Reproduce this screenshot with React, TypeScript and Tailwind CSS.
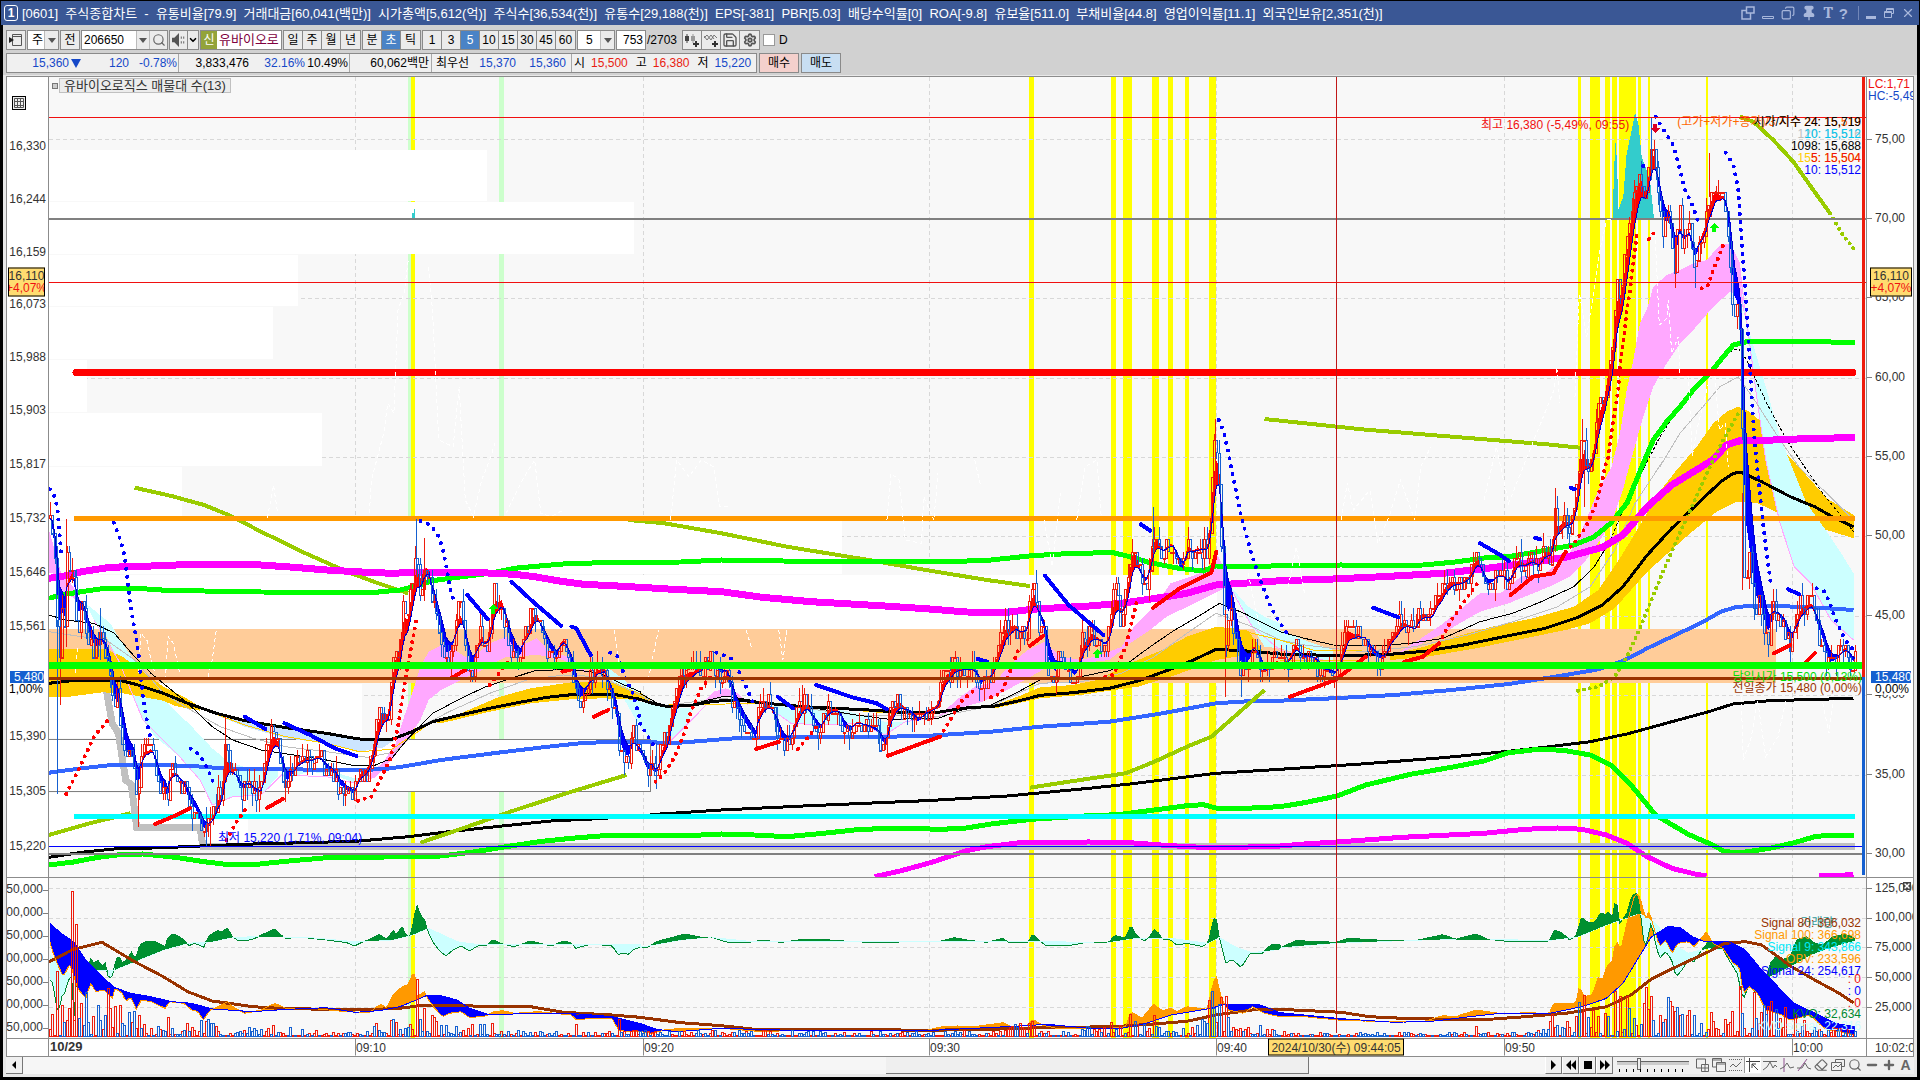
import type { ReactNode } from "react";
import { ChevronDown, Copy, Eraser, Minus, Pin, Plus, Save, Search, Settings, X } from "lucide-react";

type Pt = [number, number];
type Box = { x: number; y: number; w: number; h: number };

const MAIN: Box = { x: 49, y: 77, w: 1817, h: 800 };
const SUB: Box = { x: 49, y: 878, w: 1817, h: 160 };
const TIME: Box = { x: 49, y: 1039, w: 1817, h: 17 };

// Series are stored as fine-grained points per block: [origin x, origin y, units per px x, units per px y]
const BLOCKS: Record<string, [number, number, number, number]> = {
  A: [0, 460, 2.45, 3],
  B: [640, 460, 2.45, 3],
  C: [1280, 460, 2.45, 3],
  D: [1480, 70, 3, 3],
  E: [0, 860, 2.45, 3],
  F: [640, 860, 2.45, 3],
  G: [1280, 860, 2.45, 3],
};

// "A 120,355 150,350 / 200,10 B 80,388": a letter switches the block, a slash lifts the pen
function parse(src: string): Pt[][] {
  const out: Pt[][] = [[]];
  let b = BLOCKS.A;
  for (const t of src.trim().split(/\s+/)) {
    if (t === "/") out.push([]);
    else if (BLOCKS[t]) b = BLOCKS[t];
    else {
      const [x, y] = t.split(",").map(Number);
      out[out.length - 1].push([b[0] + x / b[2], b[1] + y / b[3]]);
    }
  }
  return out;
}

const toPath = (pts: Pt[]) => "M" + pts.map(([x, y]) => `${x.toFixed(1)} ${y.toFixed(1)}`).join("L");
const path = (src: string) => parse(src).map(toPath).join("");

function sampler(src: string) {
  const pts = parse(src).flat().sort((a, b) => a[0] - b[0]);
  return (x: number) => {
    let i = 1;
    while (i < pts.length - 1 && pts[i][0] < x) i++;
    const [x0, y0] = pts[i - 1];
    const [x1, y1] = pts[i];
    const k = Math.min(1, Math.max(0, (x - x0) / (x1 - x0 || 1)));
    return y0 + (y1 - y0) * k;
  };
}

function rng(seed: number) {
  let s = seed;
  return () => {
    s = (s * 1664525 + 1013904223) % 4294967296;
    return s / 4294967296;
  };
}

// Area between two sampled series, split by which one is on top
function between(xs: number[], top: number[], base: number[]) {
  let up = "";
  let down = "";
  for (let i = 1; i < xs.length; i++) {
    const quad = `M${xs[i - 1].toFixed(1)} ${top[i - 1].toFixed(1)}L${xs[i].toFixed(1)} ${top[i].toFixed(1)}V${base[i].toFixed(1)}L${xs[i - 1].toFixed(1)} ${base[i - 1].toFixed(1)}Z`;
    if (top[i] + top[i - 1] < base[i] + base[i - 1]) up += quad;
    else down += quad;
  }
  return { up, down };
}

const PRICE = `A 122,170 130,220 135,330 140,480 147,610 152,420 158,480 165,250 172,380 178,300 185,440 190,520 195,470 200,440 206,450 212,520 218,540 225,570 232,550 240,570 248,520 255,560 262,590 268,640 275,700 282,780 288,700 293,780 300,840 307,880 313,930 320,870 328,900 335,1040 340,960 346,880 352,850 358,860 365,880 372,860 378,900 385,960 392,990 400,1000 405,980 410,1050 415,910 425,930 435,950 445,980 455,990 462,1040 470,1040 480,1050 488,1090 495,1110 502,1120 508,1100 515,1090 520,1060 525,1050 532,1000 540,1000 548,930 553,840 558,900 565,910 572,960 580,950 585,1000 592,990 600,980 608,960 615,980 622,1000 632,1000 640,990 645,930 652,880 658,830 665,810 672,820 680,860 688,930 695,960 700,1000 705,960 712,930 720,940 725,900 730,890 738,905 748,885 760,905 775,890 785,890 795,930 805,930 815,940 825,960 832,990 840,980 850,1000 858,990 868,1010 873,960 880,920 888,930 895,930 902,920 908,880 915,830 922,790 930,740 938,750 945,770 952,760 958,640 963,600 970,550 978,580 985,450 990,430 995,470 1000,500 1005,400 1010,350 1015,320 1020,300 1025,340 1030,400 1035,340 1040,300 1047,330 1053,350 1057,440 1062,430 1070,490 1078,520 1085,560 1092,610 1100,570 1105,560 1112,520 1118,470 1124,440 1130,470 1137,520 1143,600 1150,640 1157,640 1162,580 1170,540 1176,510 1182,530 1188,560 1195,540 1202,500 1208,380 1214,400 1220,430 1228,420 1235,470 1243,530 1250,580 1258,570 1265,590 1272,600 1278,560 1285,500 1292,520 1298,480 1305,460 1313,450 1320,490 1328,530 1335,530 1340,570 1350,580 1358,590 1365,600 1370,540 1378,520 1383,540 1390,590 1400,620 1408,700 1415,740 1420,720 1428,700 1438,670 1445,640 1455,650 1462,610 1470,640 1478,620 1483,640 1490,700 1500,730 1508,760 1515,860 1522,890 1530,880 1537,910 1545,850 1553,830 1560,870 1566,880
B 5,900 12,920 20,950 28,910 35,950 42,930 50,860 58,840 66,830 72,780 78,700 85,720 90,690 97,650 105,620 112,650 120,630 130,640 137,620 145,630 152,620 160,590 168,600 178,620 185,620 192,640 200,640 212,630 220,700 228,730 235,760 245,770 255,790 265,810 275,820 283,850 288,720 295,740 303,720 310,730 317,740 325,760 332,800 340,830 347,850 355,850 362,850 370,810 378,780 385,750 392,740 398,720 405,730 412,750 420,780 430,800 440,820 447,790 455,740 465,740 475,750 485,750 492,780 500,820 508,810 515,820 522,790 530,780 540,790 550,800 560,800 570,810 580,810 590,850 600,860 606,820 611,730 618,730 625,730 633,720 642,740 650,760 660,750 668,780 675,790 685,780 693,760 700,740 710,750 720,740 732,720 738,650 745,640 752,630 760,640 768,610 775,620 785,630 795,620 805,630 815,630 825,650 833,690 840,660 848,650 857,650 865,620 872,590 880,540 888,530 895,480 902,510 910,500 917,490 925,510 932,530 940,510 948,500 955,400 962,370 968,420 975,480 985,500 990,520 997,620 1005,630 1015,650 1025,600 1035,610 1045,620 1055,640 1065,650 1072,620 1080,560 1087,520 1095,540 1105,510 1113,530 1120,540 1130,550 1137,560 1145,540 1152,500 1158,400 1163,380 1170,420 1177,470 1185,440 1193,380 1200,300 1205,230 1210,260 1218,320 1225,350 1232,380 1238,380 1245,330 1252,250 1258,210 1265,230 1272,260 1280,290 1288,260 1297,250 1305,250 1312,290 1320,340 1327,340 1335,290 1342,220 1348,270 1355,280 1363,260 1372,270 1380,260 1388,280 1395,200 1400,80 1405,-30 1410,-80 1416,0 1421,150 1427,400 1435,560 1442,470 1448,420 1455,520 1462,570 1470,650 1477,620 1485,600 1493,590 1502,530 1508,570 1518,620 1528,650 1536,630 1545,620 1553,600 1560,600 1566,610
C 10,610 20,600 30,560 38,540 45,580 55,600 65,590 75,590 85,600 95,620 105,630 115,640 125,640 135,640 142,620 150,560 158,540 166,480 172,520 180,530 190,520 200,540 208,530 215,570 225,590 235,590 245,600 255,590 262,560 270,510 280,520 290,500 298,480 305,490 315,500 325,510 332,510 338,460 345,450 352,470 358,460 365,480 372,470 380,420 388,400 395,410 402,370 410,370 420,360 430,370 440,370 450,360 460,350 470,330 478,280 485,300 493,340 500,380 508,390 515,360 523,360 530,340 540,340 550,360 560,380 568,330 575,300 582,290 590,310 600,320 610,300 620,300 630,330 637,310 645,270 652,270 660,290 667,250 672,150 680,200 690,190 700,180 710,190 716,190 722,130
D 300,1150 307,1080 315,1180 325,1190 335,1180 345,1080 352,1010 360,1000 367,980 375,960 382,900 388,860 395,850 402,760 408,620 415,600 420,700 428,640 435,560 442,490 450,430 458,370 465,340 472,330 480,310 487,350 493,400 500,390 505,300 510,240 516,200 522,260 528,320 535,380 542,440 550,490 557,470 565,440 572,490 580,540 586,600 592,500 598,430 606,520 615,510 622,480 630,480 638,600 646,580 653,510 660,490 670,470 680,440 687,360 695,400 703,330 710,360 718,400 727,370 735,400 742,470 750,560 758,700 766,780 773,680 778,740 783,900 788,1150
C 1135,330 1142,370 1150,290 1158,400 1166,450 1174,430 1182,470 1190,520 1198,530 1205,430 1213,450 1222,470 1232,490 1240,510 1248,570 1255,530 1262,480 1270,450 1278,430 1285,440 1292,430 1300,420 1308,470 1318,520 1328,540 1338,600 1348,620 1358,590 1368,590 1378,560 1386,560 1393,590 1403,610`;

const EXTREMES: string[] = [
  "A 140,480 140,1003", "A 147,500 147,735", "A 164,178 164,560", "A 1020,178 1020,330", "A 1041,235 1041,330",
  "A 340,960 340,1100", "A 246,445 246,600", "A 553,770 553,940", "A 700,960 700,1025", "A 505,1040 505,1158",
  "A 515,1040 515,1158", "A 1040,250 1040,420", "B 41,850 41,986", "B 398,675 398,760", "B 606,800 606,888",
  "B 1258,142 1258,280", "B 1411,-124 1411,100", "B 1435,450 1435,712", "B 1473,600 1473,712", "C 674,85 674,240",
  "C 746,-30 746,140", "D 515,143 515,330", "D 522,210 522,300", "D 587,500 587,655", "D 646,540 646,655",
  "D 689,250 689,380", "C 1133,100 1133,390", "C 1250,500 1250,605", "C 1408,590 1408,640", "D 307,1048 307,1150",
];

const BANDS: { fill: string; src: string }[] = [
  { fill: "#ccffff", src: "A 210,430 240,460 270,490 300,550 340,620 380,690 420,740 470,800 520,865 560,905 620,930 680,930 680,950 640,1005 570,1010 520,1035 490,960 440,890 380,830 350,780 320,690 290,600 260,530 230,480" },
  { fill: "#ccffff", src: "A 690,945 740,925 800,930 870,955 910,945 900,965 870,970 820,945 760,935 700,955 / 1480,615 1530,660 1568,700 B 0,725 40,735 100,745 130,745 110,800 80,840 60,860 30,840 0,800 A 1530,720 1500,660" },
  { fill: "#ccffff", src: "B 310,735 400,745 480,745 560,770 600,785 650,785 600,825 540,790 450,795 370,790 330,755 / 1440,370 1490,440 1530,470 1568,490 C 0,510 70,545 130,570 130,605 70,590 0,565 B 1530,560 1500,500 1470,430" },
  { fill: "#ffa8ff", src: "A 120,210 150,340 180,380 200,430 150,390 130,340 120,340 / 900,950 940,905 970,850 990,770 1010,700 1030,620 1050,575 1090,550 1140,590 1160,590 1200,550 1240,530 1270,560 1315,535 1350,580 1400,590 1440,640 1420,630 1380,600 1320,585 1240,590 1180,630 1130,660 1080,690 1050,720 1030,780 990,850 960,900 920,950" },
  { fill: "#ffa8ff", src: "B 150,735 180,695 210,685 240,700 270,740 240,712 200,712 170,725 / 730,770 780,715 820,680 870,665 910,610 950,570 990,545 1030,590 1080,600 1130,585 1180,560 1210,500 1260,440 1300,370 1350,350 1390,330 1414,285 1430,320 1440,380 1390,410 1350,435 1290,470 1250,510 1200,550 1150,600 1080,610 1000,620 950,655 900,690 840,725 780,745" },
  { fill: "#cce5ff", src: "A 530,765 600,782 700,803 800,820 900,840 970,838 940,862 880,875 800,850 700,835 600,800" },
  { fill: "#ffcc00", src: "A 120,568 200,566 260,568 300,590 350,635 400,680 450,710 490,740 490,752 430,738 400,722 300,700 250,697 160,712 120,712 / 1060,785 1120,765 1220,712 1300,685 1400,667 1500,665 1568,700 B 0,695 40,735 0,722 A 1568,720 1480,715 1400,718 1300,730 1200,755 1080,790" },
  { fill: "#ffcc00", src: "B 870,735 930,708 980,682 1060,675 1120,660 1200,610 1280,570 1340,530 1411,500 1450,505 1490,512 1530,580 1500,582 1411,600 1380,615 1300,650 1220,680 1150,692 1080,705 980,715 870,745" },
  { fill: "#ffcc00", src: "C 270,585 360,558 430,530 520,500 620,475 720,440 780,390 830,300 880,200 930,95 D 590,1200 650,1130 700,1060 740,1025 775,1010 800,1020 850,1060 900,1130 960,1195 C 1340,115 1405,165 1405,235 1340,210 1280,185 1215,155 1170,130 1120,125 1070,155 1000,225 900,335 820,445 760,490 700,510 600,535 480,565 360,590 270,600" },
  { fill: "#ffa8ff", src: "C 280,585 340,540 400,490 440,450 490,400 540,400 590,350 650,340 710,280 740,210 780,90 D 395,1190 420,1090 440,960 460,870 480,760 500,720 520,650 560,615 600,600 640,580 680,570 720,525 750,520 780,580 800,760 780,680 750,665 700,710 640,780 600,820 560,880 520,950 490,1040 450,1180 C 840,90 820,160 790,230 750,300 710,350 660,380 600,410 560,430 490,455 440,490 400,520 340,555" },
  { fill: "#ccffff", src: "D 780,620 800,760 830,860 860,960 900,1100 940,1200 C 1290,130 1340,215 1380,290 1405,340 1405,540 1350,480 1300,370 1260,320 1225,190 1190,0 D 830,980 800,780" },
];

const LINES: { stroke: string; width: number; dash?: string; src: string }[] = [
  { stroke: "#ffa8ff", width: 1, src: "A 230,480 290,600 350,780 440,890 490,960 520,1035 570,1010 640,1005 690,945 800,950 870,970 920,950 / B 30,840 60,860 110,800 170,725 / 330,755 370,790 450,795 540,790 600,825 650,785 730,770 / 1440,370 1500,500 1568,570 C 60,590 130,605 / D 780,600 830,980 C 1190,0 1225,190 1260,320 1300,370 1350,480 1405,540" },
  { stroke: "#bfbfbf", width: 1, src: "A 120,515 200,530 260,540 330,600 400,700 460,745 540,800 620,835 700,860 800,875 900,892 970,875 1030,800 1100,755 1200,700 1290,660 1380,645 1470,650 1568,705 B 50,738 200,715 340,735 530,765 730,770 860,738 980,670 1080,665 1180,640 1260,590 1340,520 1411,460 1500,500 1568,540 C 60,555 200,575 330,560 460,525 570,485 680,440 760,380 820,270 870,130 940,0 D 540,1190 600,1090 660,1020 720,950 775,920 830,1000 900,1110 960,1195 C 1340,100 1405,180" },
  { stroke: "#ffcc00", width: 1, src: "A 490,745 600,795 700,830 800,850 880,875 960,868 1060,785 / B 70,735 310,730 640,762 790,748 / 1450,505 1568,540 C 80,570 200,570 / 0,600 200,600" },
  { stroke: "#000000", width: 1, src: "A 120,465 160,480 230,490 280,520 330,590 370,640 420,690 460,730 520,800 570,840 640,870 720,885 800,900 860,915 920,915 960,895 1000,835 1060,760 1130,715 1190,680 1240,660 1310,632 1400,628 1470,640 1520,670 1568,695 B 0,700 50,735 110,740 160,722 210,708 270,720 340,735 430,745 530,765 610,778 730,775 800,745 860,735 920,700 980,660 1080,650 1150,632 1200,605 1250,560 1310,510 1360,475 1420,430 1480,460 1568,515 C 0,515 60,535 130,555 230,558 320,550 400,535 490,485 570,460 640,425 720,380 770,320 810,240" },
  { stroke: "#000000", width: 1, dash: "3 2", src: "C 810,240 850,120 900,5 D 540,1100 600,1010 680,920 740,850 775,835 800,870 860,1000 920,1110 980,1200 C 1330,100 1405,215" },
  { stroke: "#000000", width: 3, src: "A 120,670 170,663 220,660 290,660 330,672 400,700 460,730 530,760 600,782 700,803 800,820 860,833 900,840 960,838 1010,815 1060,785 1120,767 1200,745 1260,730 1340,712 1400,704 1500,702 1568,718 B 30,730 70,740 130,735 180,724 240,720 310,730 400,740 560,750 640,757 730,757 790,745 870,738 930,722 980,706 1060,698 1150,685 1220,663 1290,632 1360,598 1411,568 1500,574 1568,582 C 150,587 270,583 360,573 450,555 560,527 650,505 730,472 790,435 840,380 900,285 960,205 1020,135 1080,65 1110,40 1130,37 1180,65 1250,110 1310,140 1360,175 1405,200" },
  { stroke: "#3366ff", width: 4, src: "A 120,938 200,925 280,914 380,915 470,918 560,926 700,928 850,930 940,928 1000,917 1080,900 1220,878 1330,862 1420,850 1500,845 1568,845 B 80,850 200,838 250,833 560,831 700,828 860,815 980,800 1150,785 1280,760 1411,730 1500,723 1568,722 C 130,715 280,705 420,690 560,672 700,645 780,628 840,603 900,565 960,530 1030,490 1080,455 1120,440 1200,437 1300,442 1405,450" },
  { stroke: "#000000", width: 3, src: "A 120,1192 200,1177 280,1167 400,1163 490,1158 620,1152 750,1148 880,1143 1000,1130 1100,1115 1230,1098 1350,1083 1450,1077 1568,1068 B 50,1062 200,1050 400,1038 700,1022 900,1008 1100,985 1200,972 1411,940 1568,928 C 200,912 400,893 560,874 660,860 760,845 850,822 960,785 1050,755 1110,732 1200,722 1405,715" },
  { stroke: "#00ff00", width: 5, src: "A 120,1215 180,1206 240,1192 300,1183 350,1182 430,1192 500,1205 560,1214 620,1214 700,1204 800,1193 900,1192 1080,1188 1160,1176 1240,1160 1320,1145 1400,1135 1480,1127 1568,1127 B 100,1128 200,1122 280,1125 360,1130 450,1120 540,1108 640,1105 740,1108 800,1104 860,1092 960,1078 1100,1067 1170,1064 1260,1050 1340,1037 1380,1034 1411,1044 1500,1044 1568,1040 C 60,1028 140,1008 210,975 320,943 420,922 500,903 560,878 640,867 700,872 760,885 810,915 860,975 920,1065 1000,1123 1060,1155 1090,1175 1130,1178 1200,1165 1260,1148 1310,1130 1340,1126 1405,1126" },
  { stroke: "#ff00ff", width: 5, src: "B 575,1250 640,1232 720,1205 800,1172 850,1160 930,1148 1100,1146 1200,1148 1300,1157 1411,1164 1568,1158 C 60,1152 150,1145 300,1132 500,1120 600,1108 680,1104 740,1108 800,1125 850,1150 900,1190 960,1225 1020,1243 1045,1248 / 1320,1248 1405,1244" },
  { stroke: "#99cc00", width: 4, src: "A 330,83 420,108 500,135 560,165 640,215 740,275 850,335 920,367 1000,400 / 120,1125 220,1090 320,1060 / 1030,1148 1150,1098 1250,1055 1400,995 1535,945 / 1540,180 B 60,190 200,220 360,260 560,300 700,330 850,360 955,378 / 955,983 1050,965 1190,940 1260,905 1340,860 1400,830 1470,755 1530,690 / 1530,-123 C 200,-92 400,-72 D 200,1123 300,1133 / 780,140 820,155 880,210 940,275 1000,360 1050,430" },
  { stroke: "#00ff00", width: 5, src: "A 120,415 150,405 200,395 250,386 350,386 420,392 500,393 640,396 800,397 920,397 980,390 1020,378 1060,362 1120,352 1200,340 1260,325 1330,317 1400,310 1568,307 B 100,306 200,300 350,303 500,305 760,305 860,300 960,287 1060,280 1160,278 1200,290 1250,308 1320,325 1380,333 1411,318 1500,320 1568,317 C 150,315 250,318 350,315 430,306 500,294 560,290 640,273 720,255 770,230 810,190 850,130 890,10 D 520,1110 560,1055 600,1010 640,960 690,910 730,860 760,825 800,815 980,815 1125,817" },
  { stroke: "#ff00ff", width: 7, src: "A 120,355 150,350 200,335 270,322 370,318 450,314 540,314 640,315 720,322 800,330 900,337 960,340 1040,336 1120,337 1180,338 1260,343 1310,350 1370,363 1430,373 1500,377 1568,382 B 80,388 200,395 300,412 420,425 600,438 700,446 800,456 900,457 960,448 1100,438 1180,430 1280,412 1340,400 1411,375 1500,368 1568,362 C 130,357 250,350 400,340 500,326 600,310 700,292 790,262 840,225 900,140 960,75 1060,0 D 740,1125 780,1112 880,1110 1000,1105 1125,1103" },
];

const BLUE_DOTS = "A 122,88 132,105 140,138 145,212 150,285 / 279,188 295,240 305,285 320,440 333,530 340,590 350,708 362,800 370,840 / 1030,183 1055,195 1075,230 1085,270 1095,330 1105,400 1115,430 / 467,866 490,885 510,930 525,975 / 1495,578 1515,590 1530,650 1550,700 1568,775 B 0,790 35,860 / 187,578 222,593 245,640 265,695 283,745 / 1418,-120 1430,-85 1440,-30 1450,30 1472,165 1500,290 1520,360 1545,440 1568,490 C 20,525 / D 490,288 503,290 / 527,140 545,170 580,225 600,300 615,360 635,400 660,470 / 737,248 760,285 775,360 785,515 795,645 803,775 810,890 822,1095 831,1185 C 1180,150 1190,260 1203,375 / 1315,385 1335,395 1350,440 1365,490 1385,540 1405,570";
const BLUE_RUNS = "A 600,770 650,807 / 697,790 760,825 820,865 873,888 / 1145,405 1195,478 / 1253,365 1310,430 1375,498 / 1400,500 1412,505 1447,585 / B 337,710 375,745 / 432,675 520,712 580,730 605,748 / 827,597 850,605 / 992,347 1050,435 1135,525 / 1227,193 1250,212 / C 228,443 290,472 / 490,250 540,285 560,303 / 625,233 638,238 / 713,83 722,88 / 1245,388 1272,403";
const RED_DOTS = "A 162,1002 190,935 230,830 265,780 / 555,1140 580,1085 600,1050 / 877,1022 910,1010 935,950 955,900 975,800 990,680 1005,580 1020,480 / 1200,675 1245,605 / B 38,965 60,940 85,890 105,830 125,755 150,685 180,640 / 387,867 420,820 440,790 / 735,830 750,800 790,720 822,688 / 860,712 885,700 905,640 930,560 / 1140,650 1160,645 1190,560 1210,460 1220,410 / C 390,550 420,480 460,410 490,360 / 700,275 720,250 750,200 775,130 790,60 800,0 D 384,1165 400,1050 415,960 420,885 432,800 440,720 450,665 457,600 465,540 472,480 / 507,507 522,488 / 665,655 685,645 700,600 720,550 730,525";
const RED_RUNS = "A 380,1092 420,1072 465,1045 / 655,1043 693,1017 / 1105,655 1140,630 / 1378,635 1400,628 / 1455,770 1490,750 / B 285,867 340,845 / 608,887 690,850 735,830 / 955,558 988,527 / 1257,443 1320,387 1400,338 1412,275 / C 25,710 135,660 210,590 / 305,605 350,590 390,550 / 565,405 620,350 670,340 700,275 / 1210,580 1250,555 / 1290,605 1310,580";
const OLIVE_DOTS = "C 730,692 780,680 820,650 850,590 880,510 900,450 940,330 990,190 D 690,1190 730,1110 775,1030 / 1050,430 1085,490 1120,535";
const GHOST = "A 185,640 190,560 / 340,640 345,520 360,540 370,600 380,640 / 405,660 412,530 425,550 440,640 / 510,650 520,600 530,510 / 655,175 670,75 680,160 / 905,160 910,60 940,-80 950,-170 965,-140 975,-450 990,-500 1000,-600 / 1050,-580 1060,-440 1075,-60 1110,-40 1125,-220 1140,120 1160,170 1180,60 1200,0 1215,-60 / 1240,160 1280,60 1310,0 1325,160 1350,170 1380,150 / 1505,510 1520,640 / B 20,660 45,510 / 75,180 90,0 120,50 150,0 180,20 195,140 215,140 / 260,510 275,570 / 340,510 350,600 360,510 / 605,180 615,40 635,60 650,240 690,250 695,110 720,180 730,40 / 820,0 835,80 / 990,180 1010,320 1030,100 / 1070,180 1090,20 1120,0 1130,170 / 1490,340 1500,400 1520,510 / C 20,380 40,260 60,400 / 150,180 165,70 180,150 220,90 240,250 270,160 295,60 330,180 345,20 370,-40 / 500,120 530,-40 560,130 D 222,960 230,890 240,1000 / 285,980 298,670 320,800 345,640 360,540 380,450 398,447 / 525,490 538,765 560,745 565,690 575,850 595,800 600,920 625,920 637,1160 650,1080 690,920 705,920 718,1080 735,1060 745,1190 / C 1130,710 1135,900 1155,830 1170,720 1190,890 1220,830 1240,720 / 1330,730 1345,820 1355,720";

const MARK_BARS: Pt[] = [
  [411, 4], [1029, 5], [1111, 5], [1123, 9], [1152, 7], [1168, 5], [1185, 4], [1209, 7], [1578, 3],
  [1590, 10], [1605, 5], [1612, 5], [1619, 17], [1638, 3], [1648, 2], [1706, 2],
];
const PALE_BARS: Pt[] = [[408, 3], [499, 5]];

// volume profile rows: [top, bottom, right edge]
const PROFILE = [
  [150, 201, 487], [202, 254, 634], [255, 306, 298], [307, 359, 273], [360, 412, 87], [413, 466, 322],
  [467, 520, 182], [521, 574, 842], [575, 629, 1217], [684, 738, 362], [793, 846, 248],
];

const VGRID = [355, 643, 929, 1216, 1504, 1792];
const HGRID = [139, 298, 378, 457, 536, 616, 695, 775];
const SUB_HGRID = [888, 918, 947, 977, 1007];

const step = 2.4;
const xs = Array.from({ length: 753 }, (_, i) => 50 + i * step);

function buildCandles() {
  const price = sampler(PRICE);
  const rand = rng(41);
  const tick = 6.2;
  let red = "";
  let blue = "";
  let prev = price(xs[0]);
  const closes: number[] = [];
  for (const x of xs) {
    const raw = price(x) + (rand() - 0.5) * 20;
    const close = Math.round(raw / tick) * tick;
    closes.push(price(x));
    const hi = Math.min(prev, close) - (rand() > 0.6 ? tick * Math.ceil(rand() * 2) : 0);
    const lo = Math.max(prev, close) + (rand() > 0.6 ? tick * Math.ceil(rand() * 2) : 0);
    const top = Math.round(Math.min(prev, close));
    const h = Math.max(1, Math.round(Math.abs(prev - close)));
    const l = Math.round(x) - 1;
    const d = `M${l + 0.5} ${top + 0.5}h2v${h}h-2zM${l + 1.5} ${Math.round(hi)}V${top}M${l + 1.5} ${top + h}V${Math.round(lo)}`;
    if (close <= prev) red += d;
    else blue += d;
    prev = close;
  }
  const ema = (n: number) => {
    let v = closes[0];
    return closes.map((c) => (v += (c - v) * (2 / (n + 1))));
  };
  return { red, blue, fast: ema(3), slow: ema(6) };
}

const candles = buildCandles();
const ribbon = between(xs, candles.fast, candles.slow);

const KVO = `E 122,360 130,370 137,430 143,465 150,410 157,405 165,370 172,350 176,350 180,500 185,380 195,310 205,340 215,320 222,295 230,310 240,300 250,320 258,310 265,355 275,350 282,310 290,285 300,310 310,300 322,275 332,300 342,255 355,245 375,243 390,250 405,260 412,230 425,222 440,230 455,245 462,258 475,250 490,255 498,265 508,235 520,220 535,212 545,215 557,203 568,228 580,240 600,242 620,238 640,225 660,215 673,205 685,222 700,235 740,232 800,240 850,248 868,258 885,248 905,238 930,222 945,238 955,228 962,210 972,225 985,195 995,230 1005,225 1013,190 1020,130 1030,165 1042,182 1048,215 1060,245 1075,270 1092,288 1110,270 1130,258 1150,273 1170,258 1195,255 1207,238 1225,250 1260,260 1300,243 1350,258 1380,243 1400,248 1410,265 1450,252 1500,258 1515,285 1525,278 1540,283 1550,270 1568,262
F 20,262 40,245 70,235 110,222 150,232 175,232 215,247 260,249 300,240 345,247 400,238 440,238 500,243 590,249 650,245 730,245 770,233 800,240 850,247 890,234 900,246 950,248 962,222 975,238 995,258 1060,255 1100,246 1150,246 1163,226 1190,235 1203,193 1215,225 1235,243 1250,230 1258,208 1270,218 1280,238 1300,240 1315,255 1340,250 1380,260 1393,245 1400,205 1410,160 1418,225 1435,310 1450,298 1473,322 1495,280 1525,280 1545,255 1568,252
G 2,262 40,242 100,245 140,247 165,235 240,240 330,242 400,224 430,238 480,222 510,238 550,243 660,243 672,210 690,218 710,240 725,228 740,168 750,185 770,190 787,155 795,165 805,155 815,175 823,108 832,190 850,160 860,115 872,95 882,140 890,240 897,255 910,185 920,250 930,295 945,275 960,300 970,350 985,330 1000,300 1015,305 1030,275 1050,245 1080,255 1100,300 1120,340 1135,420 1150,370 1165,400 1190,370 1200,310 1215,290 1230,300 1250,290 1265,240 1290,230 1310,250 1330,255 1355,230 1385,222 1408,235`;
const KVO_SIGNAL = "E 122,285 150,320 185,355 230,330 280,330 340,300 400,270 460,250 520,245 570,232 640,230 750,232 850,243 900,243 960,240 1010,225 1048,205 1080,222 1120,245 1160,252 1568,252 F 2,262 100,240 170,232 260,243 700,243 950,243 1000,245 1140,248 1210,235 1300,235 1390,250 1418,232 1460,262 1500,278 1568,268 G 2,262 150,248 400,238 660,241 730,230 800,195 880,160 920,190 960,250 1000,280 1050,265 1100,270 1140,320 1190,355 1250,320 1300,285 1350,262 1408,242";
const OBV = "E 122,243 130,280 140,310 155,350 172,310 190,385 210,415 222,370 235,395 255,390 275,415 282,385 300,400 308,425 320,410 335,450 345,420 370,425 405,445 415,425 450,430 470,450 485,455 498,480 515,450 535,440 557,425 570,440 600,460 640,450 673,430 700,445 760,445 850,455 905,458 932,432 948,445 960,410 985,380 1000,375 1015,330 1022,410 1040,395 1050,420 1065,445 1085,470 1100,460 1130,455 1150,473 1190,468 1210,455 1232,452 1260,460 1320,455 1400,465 1412,480 1450,475 1500,475 1515,510 1540,515 1568,515 F 30,520 60,510 100,505 200,505 300,515 400,510 700,512 740,500 780,498 820,500 890,488 910,500 950,495 962,478 985,495 1020,505 1150,505 1190,500 1203,455 1230,475 1258,433 1280,452 1300,445 1315,455 1340,440 1390,448 1400,390 1411,345 1425,415 1440,450 1480,460 1500,440 1530,460 1568,470 G 60,470 140,480 250,485 350,485 400,467 430,470 480,450 550,462 600,458 660,460 670,430 700,430 725,430 733,380 745,410 765,405 780,350 790,360 800,320 815,300 823,240 835,270 850,190 870,100 882,110 890,150 897,175 905,150 915,200 930,260 945,240 960,280 975,250 1000,245 1015,260 1045,215 1060,250 1085,265 1110,310 1125,320 1135,400 1150,380 1170,400 1190,450 1230,465 1248,480 1300,465 1320,490 1340,510 1370,515 1408,525";
const OBV_SIGNAL = "E 122,190 150,220 180,245 210,300 250,350 280,382 320,400 370,410 420,425 470,430 520,447 620,455 700,448 800,443 870,457 930,452 980,440 1020,420 1048,405 1080,407 1120,420 1150,445 1200,465 1300,460 1400,460 1500,470 1568,490 F 40,508 90,515 200,505 400,512 700,512 900,500 1000,493 1100,505 1180,505 1240,490 1300,465 1400,445 1430,433 1520,435 1568,458 G 60,465 140,475 280,487 380,483 450,472 540,460 660,460 740,440 800,415 840,370 880,290 910,230 950,200 980,202 1010,230 1040,245 1100,245 1140,270 1180,330 1220,380 1260,430 1320,465 1360,490 1408,500";
const LONG_SIGNAL = "E 120,305 180,268 250,247 330,305 400,350 460,395 520,423 620,440 700,446 900,449 980,445 1040,435 1100,435 1200,440 1300,440 1380,457 1500,465 1568,472 F 100,488 200,497 280,508 500,508 700,511 860,508 980,503 1160,500 1260,492 1340,484 1411,465 1500,450 1568,448 G 150,457 220,470 320,476 500,479 600,470 700,460 800,440 860,405 910,357 980,315 1050,275 1090,250 1140,245 1180,255 1220,290 1250,318 1310,360 1370,400 1405,428";

const sample = (src: string) => {
  const f = sampler(src);
  return xs.map(f);
};
const kvo = sample(KVO);
const kvoArea = between(xs, kvo, sample(KVO_SIGNAL));
const obv = sample(OBV);
const obvSignal = sample(OBV_SIGNAL);
const obvArea = between(xs, obv, obvSignal);

// typical bar height along the session, then single tall bars
const VOLUME_LEVEL: Pt[] = [
  [49, 34], [60, 20], [80, 34], [100, 22], [130, 24], [150, 5], [165, 14], [180, 4], [205, 14], [220, 5], [270, 8], [330, 3],
  [365, 3], [385, 16], [420, 24], [450, 6], [480, 10], [500, 4], [600, 3], [650, 5], [900, 3], [1000, 5], [1030, 12], [1045, 3],
  [1120, 10], [1150, 14], [1180, 6], [1205, 12], [1215, 40], [1230, 12], [1245, 10], [1290, 3], [1530, 3], [1552, 14],
  [1580, 28], [1610, 28], [1650, 44], [1675, 20], [1730, 14], [1745, 36], [1790, 22], [1820, 12], [1856, 6],
];
const VOLUME_PEAKS: Pt[] = [
  [57, 65], [72, 145], [77, 112], [107, 48], [114, 30], [138, 21], [167, 19], [187, 13], [390, 16], [417, 57], [431, 21],
  [491, 13], [575, 12], [618, 17], [1031, 15], [1130, 22], [1153, 21], [1210, 36], [1222, 39], [1226, 40], [1475, 10],
  [1553, 22], [1581, 24], [1615, 45], [1644, 33], [1651, 40], [1710, 24], [1733, 25], [1740, 50], [1753, 44], [1768, 30],
];

function buildVolume() {
  const rand = rng(7);
  const level = (x: number) => {
    let i = 1;
    while (i < VOLUME_LEVEL.length - 1 && VOLUME_LEVEL[i][0] < x) i++;
    const [x0, y0] = VOLUME_LEVEL[i - 1];
    const [x1, y1] = VOLUME_LEVEL[i];
    return y0 + ((y1 - y0) * (x - x0)) / (x1 - x0);
  };
  let red = "";
  let blue = "";
  for (const x of xs) {
    const peak = VOLUME_PEAKS.find((p) => Math.abs(p[0] - x) < 1.2);
    const h = Math.round(peak ? peak[1] : Math.max(1, level(x) * Math.pow(rand(), 1.4) * 1.5));
    const d = `M${Math.round(x) - 0.5} 1036.5v${-h}h2v${h}z`;
    if (rand() > 0.5 || (peak && x !== 77)) red += d;
    else blue += d;
  }
  return { red, blue };
}
const volume = buildVolume();

function Bars({ box }: { box: Box }) {
  return (
    <>
      {PALE_BARS.map(([x, w]) => (
        <rect key={x} x={x} y={box.y} width={w} height={box.h} fill="#ccffcc" />
      ))}
      {MARK_BARS.map(([x, w]) => (
        <rect key={x} x={x} y={box.y} width={w} height={box.h} fill="#ffff00" />
      ))}
      <path
        d={VGRID.map((x) => `M${x + 0.5} ${box.y}v${box.h}`).join("")}
        stroke="#d8d8d8"
        strokeDasharray="4 3"
      />
    </>
  );
}

function Plot({ box, label, children }: { box: Box; label: string; children: ReactNode }) {
  return (
    <svg
      role="img"
      aria-label={label}
      viewBox={`${box.x} ${box.y} ${box.w} ${box.h}`}
      preserveAspectRatio="none"
      shapeRendering="crispEdges"
      fill="none"
      className="absolute inset-0 size-full"
    >
      {children}
    </svg>
  );
}

function MainPlot() {
  return (
    <Plot box={MAIN} label="Price">
      <Bars box={MAIN} />
      <path d={HGRID.map((y) => `M49 ${y + 0.5}H1866`).join("")} stroke="#d8d8d8" strokeDasharray="4 3" />
      {PROFILE.map(([t, b, r]) => (
        <rect key={t} x={49} y={t} width={r - 49} height={b - t} fill="#ffffff" />
      ))}
      <rect x={48.5} y={739.5} width={602} height={52} fill="#ffffff" stroke="#808080" />
      <rect x={49} y={629} width={1727} height={54} fill="#ffcc99" />
      <path d={path("A 185,635 255,635 262,700 275,790 290,820 308,960 322,975 335,1102 490,1102 497,1159 C 1408,1159")} stroke="#c0c0c0" strokeWidth={7} />
      <path d={path("D 398,447 402,300 407,210 412,300 415,420 430,380 440,250 455,180 465,128 475,160 485,260 500,300 510,330 522,447")} fill="#33cccc" />
      <path d="M412 219v-6h2v-4h1v10z" fill="#33cccc" />
      {BANDS.map((b) => (
        <path key={b.src} d={path(b.src)} fill={b.fill} />
      ))}
      {LINES.map((l) => (
        <path key={l.src} d={path(l.src)} stroke={l.stroke} strokeWidth={l.width} strokeDasharray={l.dash} />
      ))}
      <path d={path(OLIVE_DOTS)} stroke="#99cc00" strokeWidth={4} strokeLinecap="round" strokeDasharray="0 6" />
      <path d="M49 219H1866M49 854H1862" stroke="#808080" strokeWidth={2} />
      <path d="M76 372.5H1853" stroke="#ff0000" strokeWidth={7} strokeLinecap="round" />
      <path d="M74 518.5H1855" stroke="#ff9900" strokeWidth={5} />
      <path d="M74 816.5H1855" stroke="#00ffff" strokeWidth={5} />
      <path d={path(GHOST)} stroke="#ffffff" strokeDasharray="4 3" />
      <path d={ribbon.up} fill="#ff0000" stroke="#ff0000" />
      <path d={ribbon.down} fill="#0000ff" stroke="#0000ff" />
      <path d={candles.blue} stroke="#1560d0" />
      <path d={candles.red} stroke="#ee1c0c" />
      {EXTREMES.map((e, i) => (
        <path key={e} d={path(e)} stroke={i % 3 ? "#ee1c0c" : "#1560d0"} />
      ))}
      <path d={toPath(xs.map((x, i) => [x, candles.slow[i]]))} stroke="#0000cc" />
      <path d={path(BLUE_DOTS)} stroke="#0000ff" strokeWidth={4} strokeLinecap="round" strokeDasharray="0 8" />
      <path d={path(BLUE_RUNS)} stroke="#0000ff" strokeWidth={4} strokeLinecap="round" />
      <path d={path(RED_DOTS)} stroke="#ff0000" strokeWidth={4} strokeLinecap="round" strokeDasharray="0 7" />
      <path d={path(RED_RUNS)} stroke="#ff0000" strokeWidth={4} strokeLinecap="round" />
      <path d="M49 665.5H1862" stroke="#00ff00" strokeWidth={7} />
      <path d="M49 678.5H1862" stroke="#993300" strokeWidth={3} />
      <path d="M49 846.5H1862" stroke="#0000ff" />
      <path d="M49 117.5H1866M49 282.5H1866" stroke="#f01010" />
      <path d="M493 604l5 5h-3v5h-4v-5h-3zM1097 649l5 5h-3v4h-4v-4h-3zM1714 223l5 5h-3v4h-4v-4h-3z" fill="#00ff00" />
      <path d="M1655 133l5-5h-3v-4h-4v4h-3z" fill="#dd0022" />
      <path d="M1336.5 77V877" stroke="#c01818" />
      <rect x={1862} y={77} width={3} height={600} fill="#ee1c0c" />
      <rect x={1862} y={677} width={3} height={198} fill="#1560d0" />
    </Plot>
  );
}

function SubPlot() {
  return (
    <Plot box={SUB} label="Volume and oscillators">
      <Bars box={SUB} />
      <path d={SUB_HGRID.map((y) => `M49 ${y + 0.5}H1866`).join("")} stroke="#d8d8d8" strokeDasharray="4 3" />
      <path d={obvArea.up} fill="#ff9900" />
      <path d={kvoArea.down} fill="#ccffff" />
      <path d={toPath(xs.map((x, i) => [x, kvo[i]]))} stroke="#008833" />
      <path d={path(KVO_SIGNAL)} stroke="#ccffff" />
      <path d={kvoArea.up} fill="#009030" />
      <path d={obvArea.down} fill="#0000ff" />
      <path d={path(LONG_SIGNAL)} stroke="#993300" strokeWidth={3} />
      <path d={toPath(xs.map((x, i) => [x, obv[i]]))} stroke="#ff9900" />
      <path d={toPath(xs.map((x, i) => [x, obvSignal[i]]))} stroke="#0000ff" />
      <path d={volume.red} stroke="#ee1c0c" />
      <path d={volume.blue} stroke="#1560d0" />
      <path d="M1336.5 878V1033" stroke="#c01818" />
    </Plot>
  );
}

// A label pinned to a chart value; x and y are on the same scale as the pane it sits in
function Tag({ box, x, y, right, className = "", children }: { box: Box; x?: number; y: number; right?: boolean; className?: string; children: ReactNode }) {
  const left = x === undefined ? undefined : `${((x - box.x) / box.w) * 100}%`;
  return (
    <span
      className={`absolute -translate-y-1/2 whitespace-nowrap leading-[12px] ${right ? "-translate-x-full" : ""} ${className}`}
      style={{ left, top: `${((y - box.y) / box.h) * 100}%` }}
    >
      {children}
    </span>
  );
}

const LEFT_PRICES: [string, number][] = [
  ["16,330", 146], ["16,244", 199], ["16,159", 252], ["16,073", 304], ["15,988", 357], ["15,903", 410], ["15,817", 464],
  ["15,732", 518], ["15,646", 572], ["15,561", 626], ["15,390", 736], ["15,305", 791], ["15,220", 846],
];
const RIGHT_PRICES: [string, number][] = [
  ["75,00", 139], ["70,00", 218], ["65,00", 297], ["60,00", 377], ["55,00", 456], ["50,00", 535], ["45,00", 615], ["40,00", 694], ["35,00", 774], ["30,00", 853],
];
const LEFT_VOLUMES: [string, number][] = [
  ["50,000", 889], ["00,000", 912], ["50,000", 935], ["00,000", 958], ["50,000", 981], ["00,000", 1004], ["50,000", 1027],
];
const RIGHT_VOLUMES: [string, number][] = [["125,000", 888], ["100,000", 917], ["75,000", 947], ["50,000", 977], ["25,000", 1007]];
const TIMES: [string, number][] = [["09:10", 355], ["09:20", 643], ["09:30", 929], ["09:40", 1216], ["09:50", 1504], ["10:00", 1792]];

const OVERLAYS: { text: string; y: number; className: string }[] = [
  { text: "(고가+저가+종가)/3 지수 24: 15,519", y: 122, className: "text-[#ff6600]" },
  { text: "시가/지수 24: 15,719", y: 122, className: "text-black" },
  { text: "120: 15,516", y: 134, className: "text-[#c0c0c0]" },
  { text: "10: 15,512", y: 134, className: "text-[#00c8f0]" },
  { text: "1098: 15,688", y: 146, className: "text-black" },
  { text: "155: 15,504", y: 158, className: "text-[#ffcc00]" },
  { text: "5: 15,504", y: 158, className: "text-[#f01010]" },
  { text: "10: 15,512", y: 170, className: "text-[#0000ff]" },
];
const SUB_OVERLAYS: { text: string; y: number; className: string }[] = [
  { text: "거래량:", y: 923, className: "text-[#339999] pr-6" },
  { text: "Signal 80: 306,032", y: 923, className: "text-[#993300]" },
  { text: "Signal 100: 366,698", y: 935, className: "text-[#ff9900]" },
  { text: "Signal 9: 343,866", y: 947, className: "text-[#00e8f8]" },
  { text: "OBV: 233,596", y: 959, className: "text-[#ff9900]" },
  { text: "Signal 24: 254,617", y: 971, className: "text-[#0000ff]" },
  { text: ": 0", y: 979, className: "text-[#f01010]" },
  { text: ": 0", y: 991, className: "text-[#0000ff]" },
  { text: ": 0", y: 1003, className: "text-[#f01010]" },
  { text: "KVO: 32,634", y: 1014, className: "text-[#008833]" },
  { text: "KVO signal: 22,316", y: 1026, className: "text-[#ccffff]" },
];

const group = "flex h-5 shrink-0 border border-[#8a8a8a] bg-[#ebebeb] divide-x divide-[#8a8a8a]";

function Group({ items, active, width }: { items: string[]; active?: string; width: string }) {
  return (
    <div className={group}>
      {items.map((it) => (
        <button key={it} type="button" aria-pressed={it === active} className={`${width} ${it === active ? "bg-[#4a83c6] text-white" : ""}`}>
          {it}
        </button>
      ))}
    </div>
  );
}

function Picker({ label, options, className }: { label: string; options: string[]; className: string }) {
  return (
    <div className={`relative h-5 shrink-0 border border-[#8a8a8a] bg-white ${className}`}>
      <select aria-label={label} className="h-full w-full appearance-none bg-transparent pl-1 outline-none">
        {options.map((o) => (
          <option key={o}>{o}</option>
        ))}
      </select>
      <span className="pointer-events-none absolute inset-y-0 right-0 flex w-3.5 items-center justify-center border-l border-[#bbb] bg-[#ebebeb]">
        <span className="border-x-4 border-t-5 border-x-transparent border-t-[#555]" />
      </span>
    </div>
  );
}

function TitleBar() {
  return (
    <header className="mx-px flex h-6 shrink-0 items-center bg-[#3a5795] pr-1 text-white">
      <span className="ml-[3px] flex h-4 w-3.5 shrink-0 items-center justify-center rounded-[3px] border border-white text-[12px] font-bold">1</span>
      <h1 className="ml-1 text-[13px] whitespace-pre">
        {"[0601]  주식종합차트  -  유통비율[79.9]  거래대금[60,041(백만)]  시가총액[5,612(억)]  주식수[36,534(천)]  유통수[29,188(천)]  EPS[-381]  PBR[5.03]  배당수익률[0]  ROA[-9.8]  유보율[511.0]  부채비율[44.8]  영업이익률[11.1]  외국인보유[2,351(천)]"}
      </h1>
      <div className="ml-auto flex items-center gap-1.5 text-[#a9b8dc]">
        <button type="button" aria-label="Detach">
          <svg viewBox="0 0 14 14" className="size-3.5" fill="none" stroke="currentColor" strokeWidth="1.5"><path d="M5.500 1h7.500v6H5.500zM5 4.500H1V13h8.500V7.500" /></svg>
        </button>
        <button type="button" aria-label="Shade">
          <svg viewBox="0 0 14 14" className="size-3.5" fill="none" stroke="currentColor"><path d="M1.500 10.500h11v2h-11z" /></svg>
        </button>
        <button type="button" aria-label="Copy window"><Copy className="size-3.5 -scale-x-100" /></button>
        <button type="button" aria-label="Pin"><Pin className="size-4" fill="currentColor" /></button>
        <button type="button" className="font-serif text-[16px] font-bold">T</button>
        <button type="button" className="text-[15px] font-bold">?</button>
        <span className="ml-1 h-3.5 w-px bg-[#7287b8]" />
        <button type="button" aria-label="Minimize">
          <svg viewBox="0 0 12 14" className="h-3.5 w-3"><path d="M1 10h10v3H1z" fill="currentColor" /></svg>
        </button>
        <button type="button" aria-label="Restore">
          <svg viewBox="0 0 12 12" className="size-3" fill="none" stroke="currentColor"><path d="M3.500 4V1.500h7v5H9M1.500 4.500h7v6h-7zM1.500 5.500h7M3.500 2.500h7" /></svg>
        </button>
        <button type="button" aria-label="Close"><X className="size-3.5" /></button>
      </div>
    </header>
  );
}

function Toolbar() {
  return (
    <div className="flex gap-px px-[3px] pt-[5px]">
      <button type="button" aria-label="Panel" className="flex h-5 w-5 items-center justify-center border border-[#8a8a8a] bg-[#ebebeb]">
        <svg viewBox="0 0 14 14" className="size-3.5" fill="none" stroke="#555"><path d="M3.5 1.5h9v11h-9zM3.5 3.500h9" /><path d="M0 4l5 3-5 3z" fill="#222" stroke="none" /></svg>
      </button>
      <Picker label="Kind" options={["주", "선", "옵"]} className="w-8" />
      <button type="button" className="h-5 w-5 border border-[#8a8a8a] bg-[#ebebeb]">전</button>
      <div className="flex h-5 w-[87px] border border-[#8a8a8a] bg-white">
        <input aria-label="Code" defaultValue="206650" className="w-[54px] pl-0.5 outline-none" />
        <button type="button" aria-label="Recent codes" className="flex w-3.5 items-center justify-center border-x border-[#bbb] bg-[#ebebeb]">
          <span className="border-x-4 border-t-5 border-x-transparent border-t-[#555]" />
        </button>
        <button type="button" aria-label="Search" className="flex flex-1 items-center justify-center bg-[#ebebeb] text-[#666]"><Search className="size-3.5" /></button>
      </div>
      <div className={`${group} w-[30px]`}>
        <button type="button" aria-label="Sound" className="flex flex-1 items-center justify-center">
          <svg viewBox="0 0 12 12" className="size-3.5"><path d="M0 4h2l4-4v12L2 8H0z" fill="#555" /><path d="M8 3v2M10 3v2M8 7v2M10 7v2" stroke="#777" /></svg>
        </button>
        <button type="button" aria-label="Sound options" className="flex w-2.5 items-center justify-center"><ChevronDown className="size-2.5" strokeWidth={4} /></button>
      </div>
      <div className="flex h-5 w-[82px] items-center border border-[#8a8a8a] bg-white">
        <span className="flex h-full w-4 shrink-0 items-center justify-center bg-[#93a33a] text-white">신</span>
        <span className="overflow-hidden pl-0.5 text-[13px] leading-[18px] whitespace-nowrap text-[#800040]">유바이오로</span>
      </div>
      <Group items={["일", "주", "월", "년"]} width="w-[19px]" />
      <Group items={["분", "초", "틱"]} active="초" width="w-[19px]" />
      <Group items={["1", "3", "5", "10", "15", "30", "45", "60"]} active="5" width="w-[19px]" />
      <Picker label="Interval" options={["5", "10", "30"]} className="w-[38px] pl-1" />
      <input aria-label="Bars shown" defaultValue="753" className="h-5 w-[30px] border border-[#8a8a8a] bg-white pr-0.5 text-right outline-none" />
      <span className="flex h-5 w-[34px] items-center">/2703</span>
      <div className={`${group} text-[#555]`}>
        <button type="button" aria-label="Add chart" className="flex w-[19px] items-center justify-center">
          <svg viewBox="0 0 14 14" className="size-3.5"><path d="M0 3h4v5H0zM1.500 1h1v9h-1z" fill="#444" /><path d="M6 3h4v5H6zM7.500 1h1v9h-1z" fill="#999" /><path d="M8 11h6M11 8v6" stroke="#333" strokeWidth="2" /></svg>
        </button>
        <button type="button" aria-label="Add indicator" className="flex w-[19px] items-center justify-center">
          <svg viewBox="0 0 14 14" className="size-3.5" fill="none" stroke="#777"><path d="M0 5l3-3 4 5 3-5 3 3M0 3l3 4 4-5 3 4" /><path d="M8 11h6M11 8v6" stroke="#333" strokeWidth="2" /></svg>
        </button>
        <button type="button" aria-label="Save" className="flex w-[19px] items-center justify-center"><Save className="size-4" /></button>
        <button type="button" aria-label="Settings" className="flex w-[19px] items-center justify-center"><Settings className="size-3.5" strokeWidth={3} /></button>
      </div>
      <label className="ml-0.5 flex h-5 items-center gap-1">
        <input type="checkbox" className="size-3 appearance-none border border-[#999] bg-white" />D
      </label>
    </div>
  );
}

function QuoteRow() {
  return (
    <div className="mt-[3px] flex h-5 gap-0.5 px-[3px]">
      <dl className="flex w-[751px] items-center divide-x divide-[#a8a8a8] border border-[#8a8a8a] bg-[#f0f0f0] text-right">
        <div className="flex h-full w-[172px] items-center text-[#1548c8]">
          <dd className="flex w-[74px] items-center justify-end gap-0.5">
            15,360
            <span className="border-x-5 border-t-9 border-x-transparent border-t-[#1548c8]" />
          </dd>
          <dd className="w-12">120</dd>
          <dd className="w-12">-0.78%</dd>
        </div>
        <div className="flex h-full w-[171px] items-center">
          <dd className="w-[70px]">3,833,476</dd>
          <dd className="w-[56px] text-[#1548c8]">32.16%</dd>
          <dd className="w-[43px]">10.49%</dd>
        </div>
        <dd className="flex h-full w-[82px] items-center justify-end pr-0.5">60,062백만</dd>
        <div className="flex h-full w-[140px] items-center text-[#1548c8]">
          <dt className="w-[37px] text-black">최우선</dt>
          <dd className="w-[47px]">15,370</dd>
          <dd className="w-[50px]">15,360</dd>
        </div>
        <div className="flex h-full items-center gap-1.5 pl-0.5">
          <dt>시</dt>
          <dd className="text-[#e81c10]">15,500</dd>
          <dt className="ml-0.5">고</dt>
          <dd className="text-[#e81c10]">16,380</dd>
          <dt className="ml-0.5">저</dt>
          <dd className="text-[#1548c8]">15,220</dd>
        </div>
      </dl>
      <button type="button" className="w-10 border border-[#8a8a8a] bg-[#f4d0cc]">매수</button>
      <button type="button" className="w-10 border border-[#8a8a8a] bg-[#c8def2]">매도</button>
    </div>
  );
}

function AxisTicks({ ys, box, side }: { ys: number[]; box: Box; side: "left" | "right" }) {
  return (
    <svg viewBox={`0 ${box.y} 5 ${box.h}`} preserveAspectRatio="none" shapeRendering="crispEdges" className={`absolute inset-y-0 h-full w-[5px] ${side === "left" ? "right-0" : "left-0"}`}>
      <path d={ys.map((y) => `M0 ${y + 0.5}h5`).join("")} stroke="#808080" />
    </svg>
  );
}

const tool = "flex h-4 w-[17px] items-center justify-center text-[#666]";

function ScrollRow() {
  return (
    <div className="mx-[3px] flex h-[17px] shrink-0 bg-[#f0f0f0]">
      <button type="button" aria-label="Scroll left" className="flex w-[17px] items-center justify-center border-r border-b border-[#777] bg-[#f0f0f0]">
        <span className="border-y-4 border-r-4 border-y-transparent border-r-black" />
      </button>
      <div role="scrollbar" aria-controls="chart" aria-orientation="horizontal" aria-valuenow={72} className="flex flex-1 bg-[#f6f6f6]">
        <div className="w-[56.7%]" />
        <div className="w-[27.8%] border-r border-b border-[#777] bg-[#efefef]" />
      </div>
      <div className="flex">
        {["M2 0l5 5-5 5z", "M5 0v10L0 5zM10 0v10L5 5z", "M1 1h8v8H1z", "M0 0l5 5-5 5zM5 0l5 5-5 5z"].map((d, i) => (
          <button key={d} type="button" aria-label={["Play", "Rewind", "Stop", "Forward"][i]} className="flex w-[17px] items-center justify-center border-r border-b border-[#777] border-l border-l-white bg-[#f0f0f0]">
            <svg viewBox="0 0 10 10" className="size-2.5"><path d={d} /></svg>
          </button>
        ))}
      </div>
      <div className="relative mx-1 w-[72px] pt-1">
        <input
          type="range"
          aria-label="Speed"
          defaultValue={30}
          className="block h-1 w-full appearance-none border-t border-[#666] bg-[#ccc] [&::-webkit-slider-thumb]:h-3 [&::-webkit-slider-thumb]:w-1 [&::-webkit-slider-thumb]:appearance-none [&::-webkit-slider-thumb]:border [&::-webkit-slider-thumb]:border-[#666] [&::-webkit-slider-thumb]:bg-[#eee]"
        />
        <svg viewBox="0 0 72 3" className="absolute bottom-0.5 h-[3px] w-full" shapeRendering="crispEdges">
          <path d="M2 1.500H72" stroke="#000" strokeWidth="3" strokeDasharray="1 6" />
        </svg>
      </div>
      <div className="flex">
        <button type="button" aria-label="New pane" className={tool}><svg viewBox="0 0 14 14" className="size-3.5" fill="none" stroke="currentColor"><path d="M6 10H1.500v-9h9V6M6.500 6.500h7v7h-7zM10 6.500v7M6.500 10h7" /></svg></button>
        <button type="button" aria-label="Overlap" className={tool}><svg viewBox="0 0 14 14" className="size-3.5" fill="none" stroke="currentColor"><path d="M4 9H.5V.5h9V4M4.500 4.500h9v9h-9zM4.500 6h9M.5 2h9" /></svg></button>
        <button type="button" aria-label="Range" className={tool}><svg viewBox="0 0 14 14" className="size-3.5" fill="none" stroke="currentColor"><path d="M0 1.500h14M0 12.500h14" strokeDasharray="1 1" /><path d="M1 9l3-3 3 3 5-5" /></svg></button>
        <button type="button" aria-label="Crosshair" aria-pressed className={`${tool} border-l border-[#999] bg-white`}><svg viewBox="0 0 14 14" className="size-3.5" fill="none" stroke="#444"><path d="M0 3.500h14M3.500 0v14M6 6l6 6M6 6h4M6 6v4" /></svg></button>
        <button type="button" aria-label="Horizontal line" className={tool}><svg viewBox="0 0 14 14" className="size-3.5" fill="none" stroke="currentColor"><path d="M0 3.500h14M0 12l4-3 3-5 3 6 2-3 2 2" /></svg></button>
        <button type="button" aria-label="Vertical line" className={tool}><svg viewBox="0 0 14 14" className="size-3.5" fill="none" stroke="currentColor"><path d="M4 0v14" stroke="#905090" /><path d="M0 11l4-2 3-4 3 5 4-1" /></svg></button>
        <button type="button" aria-label="Trend line" className={tool}><svg viewBox="0 0 14 14" className="size-3.5" fill="none" stroke="currentColor"><path d="M1 13L10 1" stroke="#905090" /><path d="M0 10l5 0 3-5 3 5 3 1" /></svg></button>
        <button type="button" aria-label="Erase all" className={tool}><Eraser className="size-3.5" /></button>
        <button type="button" aria-label="Copy chart" className={tool}><svg viewBox="0 0 14 14" className="size-3.5" fill="none" stroke="currentColor"><path d="M4.500 4V1.500h9v7H11M.5 4.500h10v8H.5zM2 10l3-3 2 2 3-3" /></svg></button>
        <button type="button" aria-label="Zoom" className={tool}><Search className="size-3.5" /></button>
        <button type="button" aria-label="Zoom out" className={tool}><Minus className="size-3.5" strokeWidth={4} /></button>
        <button type="button" aria-label="Zoom in" className={tool}><Plus className="size-3.5" strokeWidth={4} /></button>
        <button type="button" className={`${tool} text-[14px] font-bold`}>A</button>
      </div>
    </div>
  );
}

const leftAxis = "relative w-[42px] shrink-0 overflow-hidden border-r border-[#8c8c8c] bg-white";
const rightAxis = "relative w-[47px] shrink-0 overflow-hidden border-l border-[#8c8c8c] bg-white";

function ChartPanel() {
  return (
    <main id="chart" className="mx-[3px] flex min-h-0 flex-1 flex-col border border-[#8c8c8c] text-[#333]">
      <section className="flex min-h-0 flex-[800_0_0px] border-b border-[#8c8c8c]">
        <div className={leftAxis}>
          <button type="button" aria-label="Table" className="absolute top-[19px] left-[5px] flex size-3.5 items-center justify-center border border-black bg-[#eee]">
            <svg viewBox="0 0 10 10" className="size-2.5" fill="none" stroke="#555"><path d="M.5.5h9v9h-9zM.5 3.500h9M.5 7.500h9M3.500 0v10M6.500 0v10" /></svg>
          </button>
          {LEFT_PRICES.map(([t, y]) => (
            <Tag key={t} box={MAIN} y={y} className="right-0.5">{t}</Tag>
          ))}
          <Tag box={MAIN} y={282} className="left-px flex h-[29px] w-[37px] flex-col items-center overflow-hidden border border-black bg-[#ffdc70]">
            <span className="pt-px">16,110</span>
            <span className="text-[#f01010]">+4,07%</span>
          </Tag>
          <Tag box={MAIN} y={677} className="left-[3px] w-[34px] bg-[#1560d0] text-right text-white">5,480</Tag>
          <Tag box={MAIN} y={689} className="left-0.5 text-black">1,00%</Tag>
        </div>
        <div className="relative flex-1 overflow-hidden bg-[#f8f8f8]">
          <MainPlot />
          <span className="absolute top-1.5 left-[3px] size-1.5 border border-[#777] bg-[#ccc]" />
          <span className="absolute top-px left-2.5 h-[15px] border border-[#c0c0c0] bg-[#ececec] px-1 text-[13px] leading-[13px]">유바이오로직스 매물대 수(13)</span>
          <Tag box={MAIN} x={1481} y={125} className="text-[#f01010]">최고 16,380 (-5,49%, 09:55)</Tag>
          <Tag box={MAIN} x={218} y={838} className="text-[#0000ff]">최저 15,220 (1,71%, 09:04)</Tag>
          <Tag box={MAIN} x={1862} y={677} right className="text-[#00e000]">당일시가 15,500 (0,13%)</Tag>
          <Tag box={MAIN} x={1862} y={688} right className="text-[#993300]">전일종가 15,480 (0,00%)</Tag>
          {OVERLAYS.map((o) => (
            <Tag key={o.text + o.className} box={MAIN} x={1861} y={o.y} right className={o.className}>{o.text}</Tag>
          ))}
        </div>
        <div className={rightAxis}>
          <AxisTicks ys={RIGHT_PRICES.map(([, y]) => y)} box={MAIN} side="right" />
          {RIGHT_PRICES.map(([t, y]) => (
            <Tag key={t} box={MAIN} y={y} className="left-2">{t}</Tag>
          ))}
          <Tag box={MAIN} y={84} className="left-px text-[#f01010]">LC:1,71</Tag>
          <Tag box={MAIN} y={96} className="left-px text-[#1548c8]">HC:-5,49</Tag>
          <Tag box={MAIN} y={282} className="left-[3px] flex h-[29px] w-[42px] flex-col items-center overflow-hidden border border-black bg-[#ffdc70]">
            <span className="pt-px">16,110</span>
            <span className="text-[#f01010]">+4,07%</span>
          </Tag>
          <Tag box={MAIN} y={677} className="left-1 w-10 overflow-hidden bg-[#1560d0] pl-1 text-white">15,480</Tag>
          <Tag box={MAIN} y={689} className="left-2 bg-white text-black">0,00%</Tag>
        </div>
      </section>
      <section className="flex min-h-0 flex-[160_0_0px] border-b border-[#8c8c8c]">
        <div className={leftAxis}>
          <AxisTicks ys={LEFT_VOLUMES.map(([, y]) => y + 1)} box={SUB} side="left" />
          {LEFT_VOLUMES.map(([t, y]) => (
            <Tag key={y} box={SUB} y={y} className="right-[5px]">{t}</Tag>
          ))}
        </div>
        <div className="relative flex-1 overflow-hidden bg-[#f8f8f8]">
          <SubPlot />
          {SUB_OVERLAYS.map((o) => (
            <Tag key={o.y + o.text} box={SUB} x={1861} y={o.y} right className={o.className}>{o.text}</Tag>
          ))}
        </div>
        <div className={rightAxis}>
          <AxisTicks ys={SUB_HGRID} box={SUB} side="right" />
          {RIGHT_VOLUMES.map(([t, y]) => (
            <Tag key={t} box={SUB} y={y} className="left-2">{t}</Tag>
          ))}
          <button type="button" aria-label="Close pane" className="absolute top-1 right-0.5 flex size-2 items-center justify-center bg-[#444] text-white"><X className="size-2" strokeWidth={4} /></button>
        </div>
      </section>
      <section className="flex h-[17px] shrink-0 bg-white">
        <div className={leftAxis} />
        <div className="relative flex-1">
          <Tag box={TIME} x={50} y={1047} className="text-[13px] font-bold">10/29</Tag>
          {TIMES.map(([t, x]) => (
            <Tag key={t} box={TIME} x={x} y={1047} className="flex h-[17px] items-center border-l border-[#8c8c8c]">{t}</Tag>
          ))}
          <Tag box={TIME} x={1268} y={1047} className="flex h-[17px] w-[136px] items-center justify-center border border-black bg-[#ffdc70]">2024/10/30(수) 09:44:05</Tag>
        </div>
        <div className={`${rightAxis} flex items-center pl-2`}>10:02:05</div>
      </section>
    </main>
  );
}

export default function App() {
  return (
    <div className="flex h-screen flex-col overflow-hidden bg-black pt-px pb-[3px] font-['Liberation_Sans','Noto_Sans_CJK_KR',sans-serif] text-[12px] leading-none text-black">
      <TitleBar />
      <div className="mx-[3px] flex min-h-0 flex-1 flex-col bg-[#d1d1d1]">
        <Toolbar />
        <QuoteRow />
        <div className="mt-0.5 flex min-h-0 flex-1 flex-col bg-[#e8e8e8] pt-px pb-[3px]">
          <ChartPanel />
          <ScrollRow />
        </div>
      </div>
    </div>
  );
}
